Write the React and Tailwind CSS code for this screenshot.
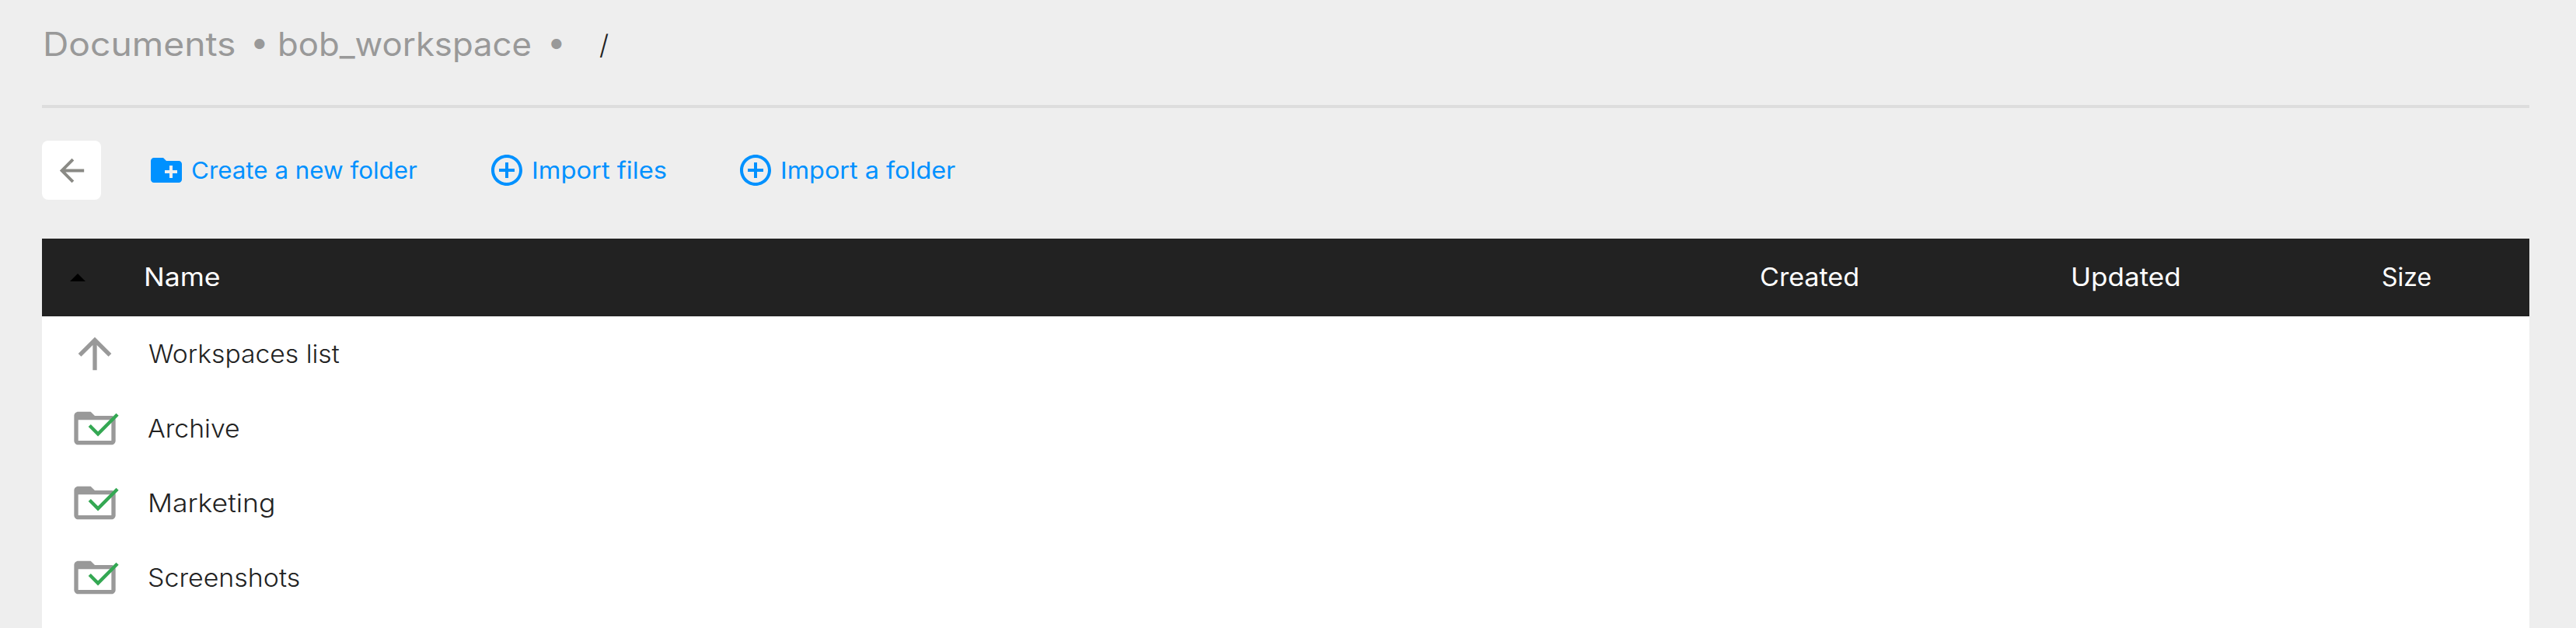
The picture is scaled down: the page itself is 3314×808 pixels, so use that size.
const COLUMNS = "grid grid-cols-[133px_2078px_401px_398px_190px] items-center";

const ENTRIES = [
  { name: "Archive", className: "-ml-px scale-x-[1.055]" },
  { name: "Marketing", className: "-ml-px scale-x-[1.11]" },
  { name: "Screenshots", className: "-ml-px scale-x-[1.06]" },
];

function BackIcon() {
  return (
    <svg viewBox="0 0 24 24" className="size-[47px] fill-[#8a8a85]">
      <path d="M20 11H7.83l5.59-5.59L12 4l-8 8 8 8 1.41-1.41L7.83 13H20v-2z" />
    </svg>
  );
}

function NewFolderIcon() {
  return (
    <svg viewBox="0 0 24 24" className="size-12 fill-current">
      <path d="M20 6h-8l-2-2H4c-1.11 0-1.99.89-1.99 2L2 18c0 1.11.89 2 2 2h16c1.11 0 2-.89 2-2V8c0-1.11-.89-2-2-2zm-1 8h-3v3h-2v-3h-3v-2h3V9h2v3h3v2z" />
    </svg>
  );
}

function AddIcon() {
  return (
    <svg viewBox="0 0 24 24" className="size-12 fill-current">
      <path d="M13 7h-2v4H7v2h4v4h2v-4h4v-2h-4V7zm-1-5C6.48 2 2 6.48 2 12s4.48 10 10 10 10-4.48 10-10S17.52 2 12 2zm0 18c-4.41 0-8-3.59-8-8s3.59-8 8-8 8 3.59 8 8-3.59 8-8 8z" />
    </svg>
  );
}

function UpIcon() {
  return (
    <svg viewBox="0 0 24 24" className="size-16 fill-[#999]">
      <path d="M4 12l1.41 1.41L11 7.83V20h2V7.83l5.58 5.59L20 12l-8-8-8 8z" />
    </svg>
  );
}

function SyncedFolderIcon() {
  return (
    <svg viewBox="0 0 24 24" className="size-16 overflow-visible">
      <path
        fill="#999"
        d="M20 6h-8l-2-2H4c-1.1 0-1.99.9-1.99 2L2 18c0 1.1.9 2 2 2h16c1.1 0 2-.9 2-2V8c0-1.1-.9-2-2-2zm0 12H4V8h16v10z"
      />
      <path
        fill="#34a853"
        transform="translate(6.05 .13) scale(.83)"
        d="M9 16.17L4.83 12l-1.42 1.41L9 19 21 7l-1.41-1.41z"
      />
    </svg>
  );
}

function Wide({ className, children }) {
  return <span className={`inline-block origin-left ${className}`}>{children}</span>;
}

function Row({ icon, children }) {
  return (
    <div className={`${COLUMNS} h-24`}>
      <div className="pl-9">{icon}</div>
      <div className="pt-0.5 pl-1 text-[32px] leading-none font-light">{children}</div>
    </div>
  );
}

export default function App() {
  return (
    <div className="flex h-[808px] w-[3314px] flex-col overflow-hidden whitespace-nowrap bg-[#eee] pl-[54px] pr-[60px] font-['Inter',sans-serif] text-[#222]">
      <nav className="flex h-[114px] shrink-0 items-center pl-px text-[42px] leading-none text-[#999]">
        <div className="w-[267px]">
          <Wide className="scale-x-[1.1]">Documents</Wide>
        </div>
        <span className="w-[35px] pb-1.5">•</span>
        <div className="w-[347px]">
          <Wide className="scale-x-[1.04]">bob_workspace</Wide>
        </div>
        <span className="w-[67px] pb-1.5">•</span>
        <span className="text-[35px] font-light text-[#222]">/</span>
      </nav>
      <div className="mt-[21px] h-1 shrink-0 bg-[#ddd]" />

      <div className="mt-[42px] flex h-[76px] shrink-0 items-center text-[30px] leading-none text-[#0091ff]">
        <button className="mr-[60px] flex size-[76px] items-center justify-center rounded-lg bg-white">
          <BackIcon />
        </button>
        <button className="flex w-[438px] items-center gap-2">
          <NewFolderIcon />
          <Wide className="scale-x-[1.045]">Create a new folder</Wide>
        </button>
        <button className="flex w-80 items-center gap-2">
          <AddIcon />
          <Wide className="scale-x-[1.09]">Import files</Wide>
        </button>
        <button className="flex items-center gap-2">
          <AddIcon />
          <Wide className="scale-x-[1.08]">Import a folder</Wide>
        </button>
      </div>

      <div className="mt-[50px] flex-1 bg-white">
        <div className={`${COLUMNS} h-[100px] bg-[#222] text-[32px] leading-none text-white`}>
          <div className="pl-9">
            <svg viewBox="0 0 20 10" className="h-2.5 w-5">
              <path d="M0 10 10 0l10 10z" />
            </svg>
          </div>
          <div className="-ml-0.5">
            <Wide className="scale-x-[1.11]">Name</Wide>
          </div>
          <div className="-ml-px">
            <Wide className="scale-x-[1.065]">Created</Wide>
          </div>
          <div className="-ml-0.5">
            <Wide className="scale-x-[1.095]">Updated</Wide>
          </div>
          <div>Size</div>
        </div>
        <Row icon={<UpIcon />}>
          <Wide className="scale-x-[1.052]">Workspaces list</Wide>
        </Row>
        {ENTRIES.map((entry) => (
          <Row key={entry.name} icon={<SyncedFolderIcon />}>
            <Wide className={entry.className}>{entry.name}</Wide>
          </Row>
        ))}
      </div>
    </div>
  );
}
